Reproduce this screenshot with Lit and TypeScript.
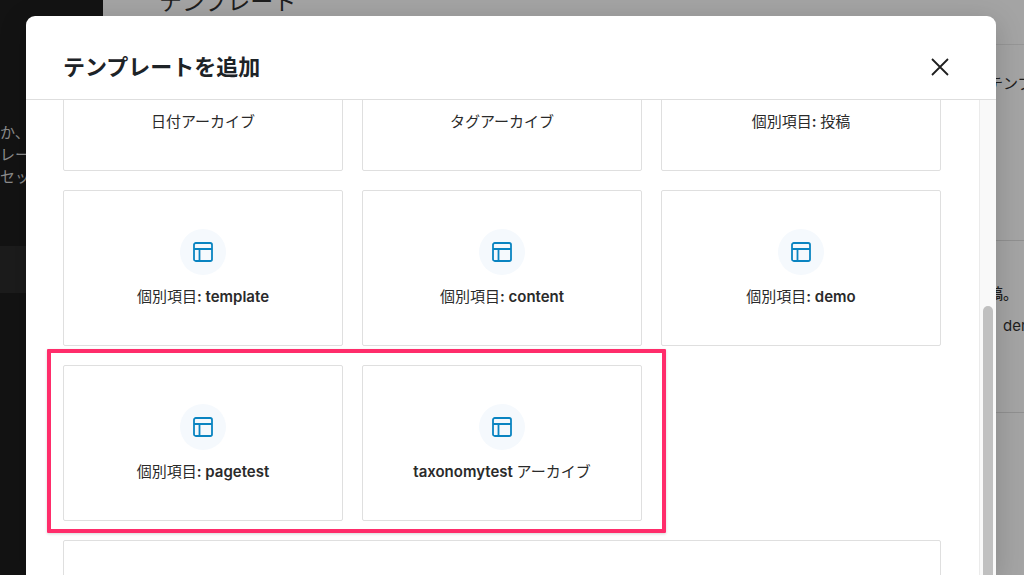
import { LitElement, html, css, svg } from "lit";
import { customElement, property, query } from "lit/decorators.js";

const sans = css`Inter, "Noto Sans CJK JP", sans-serif`;

const layoutIcon = svg`
  <rect x="1" y="1" width="18" height="18" rx="1.8" />
  <path d="M1 7H19M6.5 7V19" />
`;

@customElement("template-card")
export class TemplateCard extends LitElement {
  @property() label = "";

  static styles = css`
    :host {
      display: block;
    }
    .card {
      box-sizing: border-box;
      width: 100%;
      height: 100%;
      min-height: 156px;
      margin: 0;
      padding: 38px 16px 37px;
      display: flex;
      flex-direction: column;
      align-items: center;
      gap: 11px;
      background: #fff;
      border: 1px solid #dfdfdf;
      border-radius: 2px;
      color: #2a2a2a;
      font: 400 15px/22px ${sans};
      cursor: pointer;
    }
    .latin {
      font-weight: 600;
    }
    .badge {
      width: 46px;
      height: 46px;
      border-radius: 50%;
      background: #f5f9fd;
      display: grid;
      place-items: center;
    }
    .icon {
      display: block;
      width: 20px;
      height: 20px;
      fill: none;
      stroke: #0a84c1;
      stroke-width: 1.8;
    }
  `;

  // Latin runs are set heavier than the Japanese around them.
  private renderLabel() {
    return this.label
      .split(/([ -~]+)/)
      .filter(Boolean)
      .map((part) => (/^[ -~]/.test(part) ? html`<span class="latin">${part}</span>` : part));
  }

  render() {
    return html`
      <button class="card" type="button">
        <span class="badge">
          <svg class="icon" viewBox="0 0 20 20" aria-hidden="true">${layoutIcon}</svg>
        </span>
        <span>${this.renderLabel()}</span>
      </button>
    `;
  }
}

@customElement("app-root")
export class AppRoot extends LitElement {
  @query(".scroller") scroller!: HTMLElement;

  private templates = [
    "日付アーカイブ",
    "タグアーカイブ",
    "個別項目: 投稿",
    "個別項目: template",
    "個別項目: content",
    "個別項目: demo",
    "個別項目: pagetest",
    "taxonomytest アーカイブ",
  ];

  static styles = css`
    :host {
      display: block;
      position: relative;
      height: 100vh;
      overflow: hidden;
      background: #a4a4a4;
      color: #1e1e1e;
      font: 15px/22px ${sans};
    }
    .page {
      display: flex;
      height: 100%;
    }
    .sidebar {
      flex: none;
      width: 103px;
      background: #131313;
      color: #8c8c8c;
      overflow: hidden;
    }
    .intro {
      margin: 0;
      padding: 122px 0 58px;
      white-space: nowrap;
    }
    .current {
      height: 47px;
      background: #1c1c1c;
    }
    .main {
      flex: 1;
      min-width: 0;
    }
    .bar {
      height: 44px;
      border-bottom: 1px solid #969696;
      display: flex;
      padding-left: 56px;
    }
    .title {
      margin: -14px 0 0;
      font-size: 23px;
      line-height: 32px;
      font-weight: 400;
    }
    .row {
      box-sizing: border-box;
      display: flex;
      flex-direction: column;
      align-items: flex-start;
      width: 36px;
      margin-left: auto;
      white-space: nowrap;
    }
    .rows {
      border-bottom: 1px solid #909090;
      overflow: hidden;
    }
    .heading {
      height: 195px;
      padding-top: 28px;
    }
    .entry {
      height: 171px;
      padding-top: 42px;
      gap: 10px;
    }
    .excerpt {
      font-weight: 500;
    }
    .author {
      padding-left: 15px;
    }
    .dialog {
      position: absolute;
      inset: 16px 28px 0 26px;
      display: flex;
      flex-direction: column;
      background: #fff;
      border-radius: 9px 9px 0 0;
      overflow: hidden;
      box-shadow: 0 6px 28px rgba(0, 0, 0, 0.18);
    }
    .head {
      flex: none;
      display: flex;
      align-items: center;
      justify-content: space-between;
      box-sizing: border-box;
      height: 84px;
      padding: 19px 40px 0 37px;
      border-bottom: 1px solid #dedede;
    }
    .name {
      margin: 0;
      font-size: 22px;
      line-height: 32px;
      font-weight: 700;
      color: #1d2327;
    }
    .close {
      width: 32px;
      height: 32px;
      padding: 0;
      border: 0;
      background: none;
      display: grid;
      place-items: center;
      cursor: pointer;
    }
    .cross {
      width: 18px;
      height: 18px;
      stroke: #1e1e1e;
      stroke-width: 1.8;
    }
    .body {
      flex: 1;
      min-height: 0;
      display: flex;
    }
    .scroller {
      flex: 1;
      min-width: 0;
      overflow-y: auto;
      scrollbar-width: none;
    }
    .grid {
      position: relative;
      display: grid;
      grid-template-columns: repeat(3, minmax(0, 1fr));
      grid-auto-rows: 156px;
      gap: 19px;
      padding: 38px 38px 38px 37px;
    }
    .custom {
      grid-column: 1 / -1;
      border: 1px solid #dfdfdf;
      border-radius: 2px;
      background: #fff;
    }
    .marker {
      position: absolute;
      grid-area: 3 / 1 / 4 / 3;
      inset: -16px -24px -12px -16px;
      border: 4px solid #ff2d6b;
      border-radius: 1px;
      box-shadow: 0 1px 3px rgba(0, 0, 0, 0.16);
      pointer-events: none;
    }
    .track {
      flex: none;
      box-sizing: border-box;
      width: 17px;
      padding: 206px 3px 0;
      background: #f9f9f9;
      border-left: 1px solid #ebebeb;
    }
    .thumb {
      height: 100%;
      border-radius: 5px 5px 0 0;
      background: #c0c0c0;
    }
  `;

  firstUpdated() {
    requestAnimationFrame(() => {
      this.scroller.scrollTop = 123;
    });
  }

  render() {
    return html`
      <div class="page">
        <aside class="sidebar">
          <p class="intro">か、<br />レート<br />セット</p>
          <div class="current"></div>
        </aside>
        <main class="main">
          <header class="bar"><h1 class="title">テンプレート</h1></header>
          <div class="rows"><div class="row heading">テンプレート</div></div>
          <div class="rows">
            <div class="row entry">
              <span class="excerpt">稿。</span>
              <span class="author">demo</span>
            </div>
          </div>
        </main>
      </div>
      <section class="dialog" role="dialog" aria-labelledby="dialog-name">
        <header class="head">
          <h2 class="name" id="dialog-name">テンプレートを追加</h2>
          <button class="close" type="button" aria-label="閉じる">
            <svg class="cross" viewBox="0 0 18 18" aria-hidden="true">
              <path d="M1 1L17 17M17 1L1 17" />
            </svg>
          </button>
        </header>
        <div class="body">
          <div class="scroller">
            <div class="grid">
              ${this.templates.map((t) => html`<template-card .label=${t}></template-card>`)}
              <div class="custom"></div>
              <div class="marker"></div>
            </div>
          </div>
          <div class="track"><div class="thumb"></div></div>
        </div>
      </section>
    `;
  }
}
